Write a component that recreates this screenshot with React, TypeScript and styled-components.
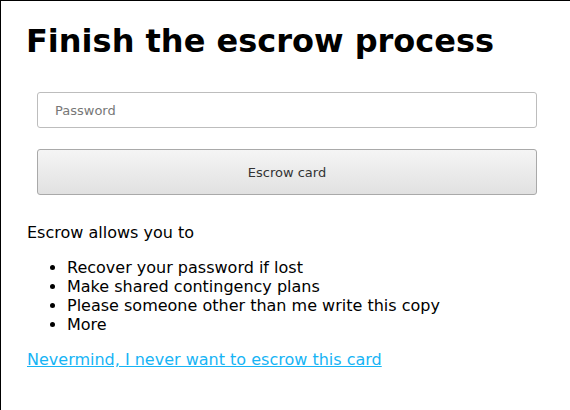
import React from "react";
import styled, { createGlobalStyle } from "styled-components";

const Global = createGlobalStyle`
  html, body { margin: 0; padding: 0; background: #fff; overflow: hidden; }
  body { font-family: "DejaVu Sans", sans-serif; color: #000; }
`;

const Frame = styled.div`
  border-top: 1px solid #000;
  border-left: 1px solid #000;
  min-height: 420px;
  padding: 0 26px;
  box-sizing: border-box;
`;

const Title = styled.h1`
  font-size: 32px;
  font-weight: bold;
  margin: 21px 0 32px -1px;
`;

const Form = styled.form`
  display: flex;
  flex-direction: column;
  gap: 21px;
  width: 500px;
  margin: 0 0 0 10px;
`;

const Input = styled.input`
  box-sizing: border-box;
  height: 36px;
  width: 100%;
  border: 1px solid #bdbdbd;
  border-radius: 3px;
  padding: 0 17px;
  font-family: "DejaVu Sans", sans-serif;
  font-size: 13px;
  color: #333;
  outline: none;
  &::placeholder { color: #777; }
`;

const Button = styled.button`
  box-sizing: border-box;
  height: 46px;
  width: 100%;
  border: 1px solid #a9a9a9;
  border-radius: 3px;
  background: linear-gradient(#f5f5f5, #e1e1e1);
  font-family: "DejaVu Sans", sans-serif;
  font-size: 13px;
  color: #333;
`;

const Text = styled.p`
  font-size: 16px;
  margin: 28px 0 16px;
`;

const List = styled.ul`
  font-size: 16px;
  margin: 16px 0;
  padding-left: 40px;
  line-height: 19px;
`;

const Link = styled.a`
  font-size: 16px;
  color: #16b4f5;
  text-decoration: underline;
`;

export default function App() {
  return (
    <>
      <Global />
      <Frame>
        <Title>Finish the escrow process</Title>
        <Form onSubmit={(e) => e.preventDefault()}>
          <Input type="password" placeholder="Password" />
          <Button type="submit">Escrow card</Button>
        </Form>
        <Text>Escrow allows you to</Text>
        <List>
          <li>Recover your password if lost</li>
          <li>Make shared contingency plans</li>
          <li>Please someone other than me write this copy</li>
          <li>More</li>
        </List>
        <Link href="#">Nevermind, I never want to escrow this card</Link>
      </Frame>
    </>
  );
}
